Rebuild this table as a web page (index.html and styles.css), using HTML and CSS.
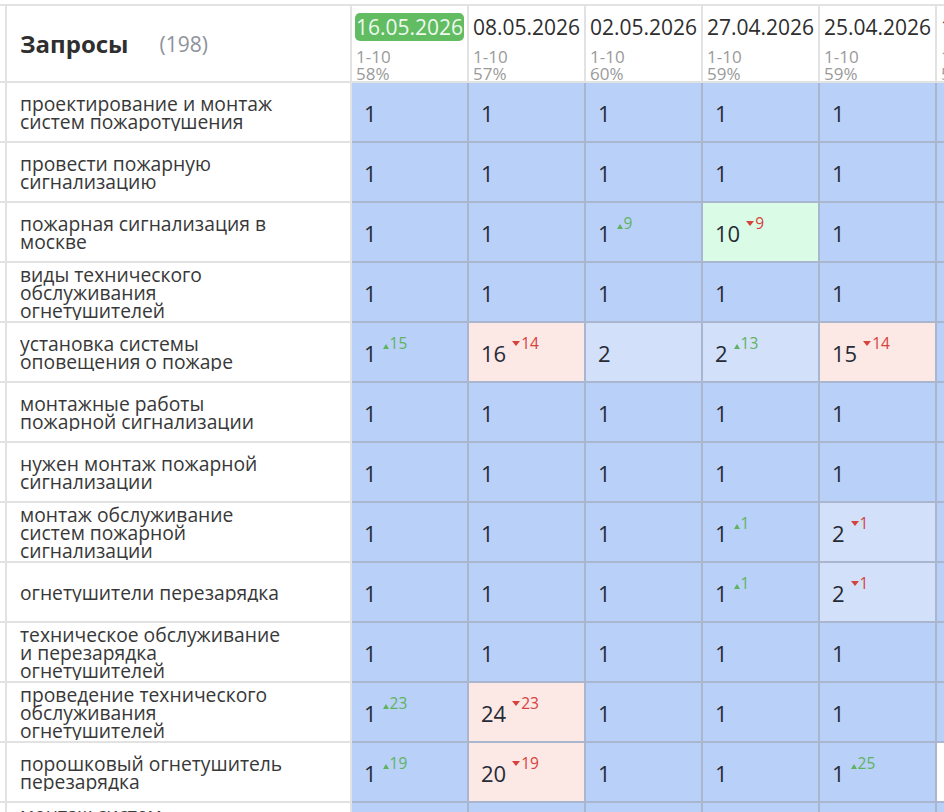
FILE: index.html
```html
<!DOCTYPE html>
<html lang="ru">
<head>
<meta charset="utf-8">
<title>Запросы</title>
<link rel="stylesheet" href="styles.css">
</head>
<body>
<div class="table">
  <div class="row head">
    <div class="lead"></div>
    <div class="qcell qhead"><span class="title">Запросы</span><span class="count">(198)</span></div>
    <div class="hcell"><span class="date today">16.05.2026</span><span class="meta">1-10<br>58%</span></div>
    <div class="hcell"><span class="date">08.05.2026</span><span class="meta">1-10<br>57%</span></div>
    <div class="hcell"><span class="date">02.05.2026</span><span class="meta">1-10<br>60%</span></div>
    <div class="hcell"><span class="date">27.04.2026</span><span class="meta">1-10<br>59%</span></div>
    <div class="hcell"><span class="date">25.04.2026</span><span class="meta">1-10<br>59%</span></div>
    <div class="hcell"><span class="date">18.04.2026</span><span class="meta">1-10<br>58%</span></div>
  </div>

  <div class="row">
    <div class="lead"></div>
    <div class="qcell"><span class="q">проектирование и монтаж систем пожаротушения</span></div>
    <div class="dcell">1</div><div class="dcell">1</div><div class="dcell">1</div><div class="dcell">1</div><div class="dcell">1</div><div class="dcell">1</div>
  </div>

  <div class="row">
    <div class="lead"></div>
    <div class="qcell"><span class="q">провести пожарную сигнализацию</span></div>
    <div class="dcell">1</div><div class="dcell">1</div><div class="dcell">1</div><div class="dcell">1</div><div class="dcell">1</div><div class="dcell">1</div>
  </div>

  <div class="row">
    <div class="lead"></div>
    <div class="qcell"><span class="q">пожарная сигнализация в москве</span></div>
    <div class="dcell">1</div><div class="dcell">1</div>
    <div class="dcell">1<span class="d up"><i class="tri"></i>9</span></div>
    <div class="dcell green">10<span class="d down"><i class="tri"></i>9</span></div>
    <div class="dcell">1</div><div class="dcell">1</div>
  </div>

  <div class="row">
    <div class="lead"></div>
    <div class="qcell"><span class="q">виды технического обслуживания огнетушителей</span></div>
    <div class="dcell">1</div><div class="dcell">1</div><div class="dcell">1</div><div class="dcell">1</div><div class="dcell">1</div><div class="dcell">1</div>
  </div>

  <div class="row">
    <div class="lead"></div>
    <div class="qcell"><span class="q">установка системы оповещения о пожаре</span></div>
    <div class="dcell">1<span class="d up"><i class="tri"></i>15</span></div>
    <div class="dcell pink">16<span class="d down"><i class="tri"></i>14</span></div>
    <div class="dcell light">2</div>
    <div class="dcell light">2<span class="d up"><i class="tri"></i>13</span></div>
    <div class="dcell pink">15<span class="d down"><i class="tri"></i>14</span></div>
    <div class="dcell">1</div>
  </div>

  <div class="row">
    <div class="lead"></div>
    <div class="qcell"><span class="q">монтажные работы пожарной сигнализации</span></div>
    <div class="dcell">1</div><div class="dcell">1</div><div class="dcell">1</div><div class="dcell">1</div><div class="dcell">1</div><div class="dcell">1</div>
  </div>

  <div class="row">
    <div class="lead"></div>
    <div class="qcell"><span class="q">нужен монтаж пожарной сигнализации</span></div>
    <div class="dcell">1</div><div class="dcell">1</div><div class="dcell">1</div><div class="dcell">1</div><div class="dcell">1</div><div class="dcell">1</div>
  </div>

  <div class="row">
    <div class="lead"></div>
    <div class="qcell"><span class="q">монтаж обслуживание систем пожарной сигнализации</span></div>
    <div class="dcell">1</div><div class="dcell">1</div><div class="dcell">1</div>
    <div class="dcell">1<span class="d up"><i class="tri"></i>1</span></div>
    <div class="dcell light">2<span class="d down"><i class="tri"></i>1</span></div>
    <div class="dcell">1</div>
  </div>

  <div class="row">
    <div class="lead"></div>
    <div class="qcell"><span class="q">огнетушители перезарядка</span></div>
    <div class="dcell">1</div><div class="dcell">1</div><div class="dcell">1</div>
    <div class="dcell">1<span class="d up"><i class="tri"></i>1</span></div>
    <div class="dcell light">2<span class="d down"><i class="tri"></i>1</span></div>
    <div class="dcell">1</div>
  </div>

  <div class="row">
    <div class="lead"></div>
    <div class="qcell"><span class="q">техническое обслуживание и перезарядка огнетушителей</span></div>
    <div class="dcell">1</div><div class="dcell">1</div><div class="dcell">1</div><div class="dcell">1</div><div class="dcell">1</div><div class="dcell">1</div>
  </div>

  <div class="row">
    <div class="lead"></div>
    <div class="qcell"><span class="q">проведение технического обслуживания огнетушителей</span></div>
    <div class="dcell">1<span class="d up"><i class="tri"></i>23</span></div>
    <div class="dcell pink">24<span class="d down"><i class="tri"></i>23</span></div>
    <div class="dcell">1</div><div class="dcell">1</div><div class="dcell">1</div><div class="dcell">1</div>
  </div>

  <div class="row">
    <div class="lead"></div>
    <div class="qcell"><span class="q">порошковый огнетушитель перезарядка</span></div>
    <div class="dcell">1<span class="d up"><i class="tri"></i>19</span></div>
    <div class="dcell pink">20<span class="d down"><i class="tri"></i>19</span></div>
    <div class="dcell">1</div><div class="dcell">1</div>
    <div class="dcell">1<span class="d up"><i class="tri"></i>25</span></div>
    <div class="dcell empty"></div>
  </div>

  <div class="row">
    <div class="lead"></div>
    <div class="qcell"><span class="q">монтаж систем противопожарной защиты зданий</span></div>
    <div class="dcell">1</div><div class="dcell">1</div><div class="dcell">1</div><div class="dcell">1</div><div class="dcell">1</div><div class="dcell">1</div>
  </div>
</div>
</body>
</html>
```

FILE: styles.css
```css
html, body {
  margin: 0;
  padding: 0;
  background: #ffffff;
}

body {
  padding-top: 4px;
  width: 944px;
  height: 808px;
  overflow: hidden;
  font-family: "Open Sans", "Noto Sans", sans-serif;
  color: #333333;
}

.table {
  width: 1100px;
}

.row {
  display: grid;
  grid-template-columns: 7px 345px repeat(6, 117px);
  height: 60px;
}

.row > div {
  box-sizing: border-box;
  border-right: 2px solid #a9b6cd;
  border-bottom: 2px solid #a9b6cd;
  overflow: hidden;
}

.row > .lead,
.row > .qcell {
  border-color: #e2e2e2;
  background: #ffffff;
}

/* header */
.head {
  height: 79px;
}

.head > div {
  border-top: 2px solid #e2e2e2;
  border-right-color: #e2e2e2;
  border-bottom-color: #e2e2e2;
  background: #ffffff;
}

.qcell {
  display: flex;
  align-items: center;
  padding: 2px 0 0 13px;
}

.qhead {
  padding: 0 0 0 13px;
}

.title {
  font-size: 24px;
  font-weight: 700;
  color: #2f2f2f;
}

.count {
  margin-left: 31px;
  font-size: 21px;
  color: #8e929c;
}

.q {
  display: -webkit-box;
  -webkit-box-orient: vertical;
  -webkit-line-clamp: 3;
  max-width: 272px;
  max-height: 54px;
  overflow: hidden;
  font-size: 19.3px;
  line-height: 18px;
  color: #383838;
}

.hcell {
  display: flex;
  flex-direction: column;
  align-items: flex-start;
  padding: 7px 0 0 3px;
}

.date {
  font-size: 21px;
  line-height: 28px;
  color: #2e2e2e;
  white-space: nowrap;
  padding: 0 1px;
  border-radius: 5px;
}

.date.today {
  background: #62bc62;
  color: #eef9ee;
}

.meta {
  margin-top: 7px;
  font-size: 17px;
  line-height: 17px;
  color: #9a9a9a;
  padding-left: 1px;
}

/* data cells */
.dcell {
  background: #b9d0f8;
  padding: 2px 0 0 12px;
  font-size: 22px;
  line-height: 56px;
  color: #262b36;
  white-space: nowrap;
}

.dcell.light {
  background: #d2e0fa;
}

.dcell.pink {
  background: #fce8e5;
}

.dcell.green {
  background: #dafce6;
}

.dcell.empty {
  background: #ffffff;
}

.d {
  display: inline-block;
  margin-left: 6px;
  font-size: 15.5px;
  line-height: 15px;
  vertical-align: 13px;
}

.d.up {
  color: #5fb35f;
}

.d.down {
  color: #d6423c;
}

.tri {
  display: inline-block;
  width: 0;
  height: 0;
}

.up .tri {
  border-left: 3px solid transparent;
  border-right: 3px solid transparent;
  border-bottom: 5px solid #5fb35f;
  margin-right: 1px;
}

.down .tri {
  border-left: 4.5px solid transparent;
  border-right: 4.5px solid transparent;
  border-top: 5px solid #d6423c;
  vertical-align: 3px;
  margin-right: 1px;
}
```
